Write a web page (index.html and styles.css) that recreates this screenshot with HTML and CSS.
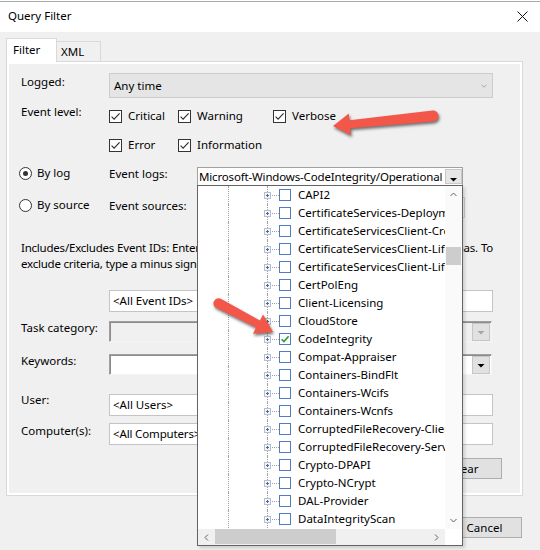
FILE: index.html
```html
<!DOCTYPE html>
<html>
<head>
<meta charset="utf-8">
<title>Query Filter</title>
<link rel="stylesheet" href="styles.css">
</head>
<body>
<div class="window">
  <div class="titlebar">
    <span class="title">Query Filter</span>
    <svg class="close" width="11" height="11" viewBox="0 0 11 11"><path d="M0.5 0.5L10.5 10.5M10.5 0.5L0.5 10.5" stroke="#111" stroke-width="1"/></svg>
  </div>
  <div class="content">
    <div class="tabs">
      <div class="tab tab-active">Filter</div>
      <div class="tab">XML</div>
    </div>
    <div class="panel">
      <div class="row row-logged">
        <div class="label">Logged:</div>
        <div class="combo-disabled"><span>Any time</span><svg class="chev-light" width="6" height="4" viewBox="0 0 6 4"><path d="M0.5 0.8L3 3.2L5.5 0.8" fill="none" stroke="#a8a8a8" stroke-width="1"/></svg></div>
      </div>
      <div class="row row-level">
        <div class="label">Event level:</div>
        <div class="levels">
          <div class="check"><span class="box"><svg width="11" height="11" viewBox="0 0 11 11"><path d="M1.6 5.6L4.1 8.1L9.6 2.4" fill="none" stroke="#2b2b2b" stroke-width="1.1"/></svg></span>Critical</div>
          <div class="check"><span class="box"><svg width="11" height="11" viewBox="0 0 11 11"><path d="M1.6 5.6L4.1 8.1L9.6 2.4" fill="none" stroke="#2b2b2b" stroke-width="1.1"/></svg></span>Warning</div>
          <div class="check"><span class="box"><svg width="11" height="11" viewBox="0 0 11 11"><path d="M1.6 5.6L4.1 8.1L9.6 2.4" fill="none" stroke="#2b2b2b" stroke-width="1.1"/></svg></span>Verbose</div>
          <div class="check"><span class="box"><svg width="11" height="11" viewBox="0 0 11 11"><path d="M1.6 5.6L4.1 8.1L9.6 2.4" fill="none" stroke="#2b2b2b" stroke-width="1.1"/></svg></span>Error</div>
          <div class="check"><span class="box"><svg width="11" height="11" viewBox="0 0 11 11"><path d="M1.6 5.6L4.1 8.1L9.6 2.4" fill="none" stroke="#2b2b2b" stroke-width="1.1"/></svg></span>Information</div>
        </div>
      </div>
      <div class="row row-log">
        <div class="radio-col"><span class="radio radio-on"></span>By log</div>
        <div class="label label-mid">Event logs:</div>
        <div class="logs">
          <div class="logs-box">
            <span class="logs-text">Microsoft-Windows-CodeIntegrity/Operational</span>
            <span class="drop-btn"><svg width="15" height="13" viewBox="0 0 15 13"><path d="M4 8H11L7.5 11.5Z" fill="#000"/></svg></span>
          </div>
          <div class="popup">
            <div class="tree">
              <div class="node"><span class="guide"></span><span class="exp"><svg width="7" height="7" viewBox="0 0 7 7"><rect x="0.5" y="0.5" width="6" height="6" fill="#f4f6fa" stroke="#b8c0cf"/><path d="M2 3.5H5M3.5 2V5" stroke="#4a6aa8"/></svg></span><span class="conn"></span><span class="cb"></span><span class="name">CAPI2</span></div>
              <div class="node"><span class="guide"></span><span class="exp"><svg width="7" height="7" viewBox="0 0 7 7"><rect x="0.5" y="0.5" width="6" height="6" fill="#f4f6fa" stroke="#b8c0cf"/><path d="M2 3.5H5M3.5 2V5" stroke="#4a6aa8"/></svg></span><span class="conn"></span><span class="cb"></span><span class="name">CertificateServices-Deployment</span></div>
              <div class="node"><span class="guide"></span><span class="exp"><svg width="7" height="7" viewBox="0 0 7 7"><rect x="0.5" y="0.5" width="6" height="6" fill="#f4f6fa" stroke="#b8c0cf"/><path d="M2 3.5H5M3.5 2V5" stroke="#4a6aa8"/></svg></span><span class="conn"></span><span class="cb"></span><span class="name">CertificateServicesClient-CredentialRoaming</span></div>
              <div class="node"><span class="guide"></span><span class="exp"><svg width="7" height="7" viewBox="0 0 7 7"><rect x="0.5" y="0.5" width="6" height="6" fill="#f4f6fa" stroke="#b8c0cf"/><path d="M2 3.5H5M3.5 2V5" stroke="#4a6aa8"/></svg></span><span class="conn"></span><span class="cb"></span><span class="name">CertificateServicesClient-Lifecycle-System</span></div>
              <div class="node"><span class="guide"></span><span class="exp"><svg width="7" height="7" viewBox="0 0 7 7"><rect x="0.5" y="0.5" width="6" height="6" fill="#f4f6fa" stroke="#b8c0cf"/><path d="M2 3.5H5M3.5 2V5" stroke="#4a6aa8"/></svg></span><span class="conn"></span><span class="cb"></span><span class="name">CertificateServicesClient-Lifecycle-User</span></div>
              <div class="node"><span class="guide"></span><span class="exp"><svg width="7" height="7" viewBox="0 0 7 7"><rect x="0.5" y="0.5" width="6" height="6" fill="#f4f6fa" stroke="#b8c0cf"/><path d="M2 3.5H5M3.5 2V5" stroke="#4a6aa8"/></svg></span><span class="conn"></span><span class="cb"></span><span class="name">CertPolEng</span></div>
              <div class="node"><span class="guide"></span><span class="exp"><svg width="7" height="7" viewBox="0 0 7 7"><rect x="0.5" y="0.5" width="6" height="6" fill="#f4f6fa" stroke="#b8c0cf"/><path d="M2 3.5H5M3.5 2V5" stroke="#4a6aa8"/></svg></span><span class="conn"></span><span class="cb"></span><span class="name">Client-Licensing</span></div>
              <div class="node"><span class="guide"></span><span class="exp"><svg width="7" height="7" viewBox="0 0 7 7"><rect x="0.5" y="0.5" width="6" height="6" fill="#f4f6fa" stroke="#b8c0cf"/><path d="M2 3.5H5M3.5 2V5" stroke="#4a6aa8"/></svg></span><span class="conn"></span><span class="cb"></span><span class="name">CloudStore</span></div>
              <div class="node"><span class="guide"></span><span class="exp"><svg width="7" height="7" viewBox="0 0 7 7"><rect x="0.5" y="0.5" width="6" height="6" fill="#f4f6fa" stroke="#b8c0cf"/><path d="M2 3.5H5M3.5 2V5" stroke="#4a6aa8"/></svg></span><span class="conn"></span><span class="cb"><svg width="10" height="10" viewBox="0 0 10 10"><path d="M1.6 5.2L4 7.6L8.6 2.2" fill="none" stroke="#2f9a35" stroke-width="1.6"/></svg></span><span class="name">CodeIntegrity</span></div>
              <div class="node"><span class="guide"></span><span class="exp"><svg width="7" height="7" viewBox="0 0 7 7"><rect x="0.5" y="0.5" width="6" height="6" fill="#f4f6fa" stroke="#b8c0cf"/><path d="M2 3.5H5M3.5 2V5" stroke="#4a6aa8"/></svg></span><span class="conn"></span><span class="cb"></span><span class="name">Compat-Appraiser</span></div>
              <div class="node"><span class="guide"></span><span class="exp"><svg width="7" height="7" viewBox="0 0 7 7"><rect x="0.5" y="0.5" width="6" height="6" fill="#f4f6fa" stroke="#b8c0cf"/><path d="M2 3.5H5M3.5 2V5" stroke="#4a6aa8"/></svg></span><span class="conn"></span><span class="cb"></span><span class="name">Containers-BindFlt</span></div>
              <div class="node"><span class="guide"></span><span class="exp"><svg width="7" height="7" viewBox="0 0 7 7"><rect x="0.5" y="0.5" width="6" height="6" fill="#f4f6fa" stroke="#b8c0cf"/><path d="M2 3.5H5M3.5 2V5" stroke="#4a6aa8"/></svg></span><span class="conn"></span><span class="cb"></span><span class="name">Containers-Wcifs</span></div>
              <div class="node"><span class="guide"></span><span class="exp"><svg width="7" height="7" viewBox="0 0 7 7"><rect x="0.5" y="0.5" width="6" height="6" fill="#f4f6fa" stroke="#b8c0cf"/><path d="M2 3.5H5M3.5 2V5" stroke="#4a6aa8"/></svg></span><span class="conn"></span><span class="cb"></span><span class="name">Containers-Wcnfs</span></div>
              <div class="node"><span class="guide"></span><span class="exp"><svg width="7" height="7" viewBox="0 0 7 7"><rect x="0.5" y="0.5" width="6" height="6" fill="#f4f6fa" stroke="#b8c0cf"/><path d="M2 3.5H5M3.5 2V5" stroke="#4a6aa8"/></svg></span><span class="conn"></span><span class="cb"></span><span class="name">CorruptedFileRecovery-Client</span></div>
              <div class="node"><span class="guide"></span><span class="exp"><svg width="7" height="7" viewBox="0 0 7 7"><rect x="0.5" y="0.5" width="6" height="6" fill="#f4f6fa" stroke="#b8c0cf"/><path d="M2 3.5H5M3.5 2V5" stroke="#4a6aa8"/></svg></span><span class="conn"></span><span class="cb"></span><span class="name">CorruptedFileRecovery-Server</span></div>
              <div class="node"><span class="guide"></span><span class="exp"><svg width="7" height="7" viewBox="0 0 7 7"><rect x="0.5" y="0.5" width="6" height="6" fill="#f4f6fa" stroke="#b8c0cf"/><path d="M2 3.5H5M3.5 2V5" stroke="#4a6aa8"/></svg></span><span class="conn"></span><span class="cb"></span><span class="name">Crypto-DPAPI</span></div>
              <div class="node"><span class="guide"></span><span class="exp"><svg width="7" height="7" viewBox="0 0 7 7"><rect x="0.5" y="0.5" width="6" height="6" fill="#f4f6fa" stroke="#b8c0cf"/><path d="M2 3.5H5M3.5 2V5" stroke="#4a6aa8"/></svg></span><span class="conn"></span><span class="cb"></span><span class="name">Crypto-NCrypt</span></div>
              <div class="node"><span class="guide"></span><span class="exp"><svg width="7" height="7" viewBox="0 0 7 7"><rect x="0.5" y="0.5" width="6" height="6" fill="#f4f6fa" stroke="#b8c0cf"/><path d="M2 3.5H5M3.5 2V5" stroke="#4a6aa8"/></svg></span><span class="conn"></span><span class="cb"></span><span class="name">DAL-Provider</span></div>
              <div class="node"><span class="guide"></span><span class="exp"><svg width="7" height="7" viewBox="0 0 7 7"><rect x="0.5" y="0.5" width="6" height="6" fill="#f4f6fa" stroke="#b8c0cf"/><path d="M2 3.5H5M3.5 2V5" stroke="#4a6aa8"/></svg></span><span class="conn"></span><span class="cb"></span><span class="name">DataIntegrityScan</span></div>
            </div>
            <div class="vscroll">
              <span class="sb-btn"><svg width="7" height="5" viewBox="0 0 7 5"><path d="M0.5 4L3.5 1L6.5 4" fill="none" stroke="#606060" stroke-width="1"/></svg></span>
              <span class="vtrack"><span class="vthumb"></span></span>
              <span class="sb-btn"><svg width="7" height="5" viewBox="0 0 7 5"><path d="M0.5 1L3.5 4L6.5 1" fill="none" stroke="#606060" stroke-width="1"/></svg></span>
            </div>
            <div class="hscroll">
              <span class="sb-btn sb-h"><svg width="5" height="7" viewBox="0 0 5 7"><path d="M4 0.5L1 3.5L4 6.5" fill="none" stroke="#606060" stroke-width="1"/></svg></span>
              <span class="htrack"><span class="hthumb"></span></span>
              <span class="sb-btn sb-h"><svg width="5" height="7" viewBox="0 0 5 7"><path d="M1 0.5L4 3.5L1 6.5" fill="none" stroke="#606060" stroke-width="1"/></svg></span>
            </div>
            <div class="corner"></div>
          </div>
        </div>
      </div>
      <div class="row row-src">
        <div class="radio-col"><span class="radio"></span>By source</div>
        <div class="label label-mid">Event sources:</div>
        <div class="src-field"></div>
      </div>
      <p class="para"><span class="para-line1">Includes/Excludes Event IDs: Enter ID numbers and/or ID ranges separated by commas. To</span><span class="para-line2">exclude criteria, type a minus sign first. For example 1,3,5-99,-76</span></p>
      <div class="row row-ids">
        <div class="label"></div>
        <div class="field">&lt;All Event IDs&gt;</div>
      </div>
      <div class="row row-task">
        <div class="label">Task category:</div>
        <div class="field3d field3d-disabled"><span class="mini-btn"><svg width="16" height="16" viewBox="0 0 16 16"><path d="M4.5 7H11.5L8 10.5Z" fill="#a6a6a6"/></svg></span></div>
      </div>
      <div class="row row-kw">
        <div class="label">Keywords:</div>
        <div class="field3d"><span class="mini-btn"><svg width="16" height="16" viewBox="0 0 16 16"><path d="M4.5 7H11.5L8 10.5Z" fill="#000"/></svg></span></div>
      </div>
      <div class="row row-user">
        <div class="label">User:</div>
        <div class="field">&lt;All Users&gt;</div>
      </div>
      <div class="row row-comp">
        <div class="label">Computer(s):</div>
        <div class="field field-tight">&lt;All Computers&gt;</div>
      </div>
      <div class="btn btn-clear">Clear</div>
    </div>
    <div class="footer">
      <div class="btn">OK</div>
      <div class="btn">Cancel</div>
    </div>
  </div>
  <svg class="arrows" width="540" height="550" viewBox="0 0 540 550">
    <path d="M333 126L348.8 113.4L349.5 120.3L432.5 110.5A5.5 5.5 0 0 1 433.5 121.5L350.3 128.3L351 135.2Z" fill="#f3574a"/>
    <path d="M273 332L263.1 314.4L259.9 320.6L220.3 298.6A5 5 0 0 0 215.7 307.4L256.1 327.6L252.9 333.8Z" fill="#f3574a"/>
  </svg>
</div>
</body>
</html>
```

FILE: styles.css
```css
* {
  box-sizing: border-box;
}

html,
body {
  margin: 0;
  padding: 0;
  background: #ffffff;
}

body {
  font-family: "Noto Sans", "DejaVu Sans", sans-serif;
  font-size: 11.5px;
  line-height: 16px;
  color: #000000;
}

.window {
  position: relative;
  width: 540px;
  height: 550px;
  overflow: hidden;
  padding-top: 1px;
  background: #ffffff;
}

.titlebar {
  height: 31px;
  border-top: 1px solid #a8a8a8;
  background: #ffffff;
  display: flex;
  align-items: center;
  justify-content: space-between;
  padding: 0 12px 2px 8px;
}

.close {
  display: block;
}

.content {
  background: #f0f0f0;
  height: 518px;
  padding: 6px 0 0 6px;
}

.tabs {
  display: flex;
  align-items: flex-end;
  height: 23px;
  position: relative;
  z-index: 1;
}

.tab {
  width: 44px;
  height: 20px;
  padding-left: 4px;
  border: 1px solid #d9d9d9;
  border-left: none;
  border-bottom: none;
  background: #f0f0f0;
  line-height: 19px;
}

.tab-active {
  width: 51px;
  height: 24px;
  margin-bottom: -1px;
  padding-left: 6px;
  border-left: 1px solid #d9d9d9;
  background: #ffffff;
  line-height: 22px;
}

.panel {
  width: 517px;
  height: 435px;
  border: 1px solid #d9d9d9;
  box-shadow: inset 0 0 0 2px #ffffff;
  padding: 11px 0 0 14px;
  display: flex;
  flex-direction: column;
}

.row {
  display: flex;
  align-items: flex-start;
}

.label {
  width: 88px;
  flex: none;
  white-space: nowrap;
}

.row-logged .label {
  padding-top: 1px;
}

.combo-disabled {
  width: 384px;
  height: 25px;
  background: #e5e5e5;
  border: 1px solid #cccccc;
  display: flex;
  align-items: center;
  justify-content: space-between;
  padding: 0 5px 0 4px;
}

.chev-light {
  display: block;
}

.row-level {
  margin-top: 6px;
}

.levels {
  display: grid;
  grid-template-columns: 69px 95px auto;
  row-gap: 13px;
  padding-top: 4px;
}

.check {
  display: flex;
  align-items: center;
  gap: 6px;
  height: 16px;
  white-space: nowrap;
}

.box {
  width: 13px;
  height: 13px;
  flex: none;
  border: 1px solid #333333;
  background: #ffffff;
  display: flex;
}

.row-log {
  margin-top: 12px;
  margin-left: -2px;
  height: 21px;
  position: relative;
  z-index: 5;
}

.row-src {
  margin-top: 11px;
  margin-left: -2px;
  height: 21px;
}

.radio-col {
  width: 90px;
  flex: none;
  display: flex;
  align-items: center;
  gap: 5px;
  height: 16px;
  white-space: nowrap;
}

.radio {
  width: 13px;
  height: 13px;
  flex: none;
  border: 1px solid #333333;
  border-radius: 50%;
  background: #ffffff;
  display: flex;
  align-items: center;
  justify-content: center;
}

.radio-on::after {
  content: "";
  width: 5px;
  height: 5px;
  border-radius: 50%;
  background: #333333;
}

.label-mid {
  padding-top: 1px;
}

.logs {
  position: relative;
  width: 266px;
  margin-top: 2px;
}

.logs-box {
  height: 19px;
  border: 1px solid #a0a0a0;
  background: #ffffff;
  display: flex;
}

.logs-text {
  flex: 1;
  min-width: 0;
  overflow: hidden;
  white-space: nowrap;
  line-height: 17px;
  padding-left: 1px;
  letter-spacing: -0.16px;
}

.drop-btn {
  width: 17px;
  height: 15px;
  margin: 1px 0;
  flex: none;
  background: #e6e6e6;
  border: 1px solid #c8c8c8;
  display: flex;
  align-items: flex-start;
  justify-content: center;
  overflow: hidden;
}

.popup {
  position: absolute;
  left: 0;
  top: 18px;
  width: 266px;
  height: 361px;
  border: 1px solid #646464;
  background: #ffffff;
  display: grid;
  grid-template-columns: 247px 17px;
  grid-template-rows: 343px 16px;
  z-index: 10;
  box-shadow: 2px 2px 3px rgba(0, 0, 0, 0.15);
}

.tree {
  overflow: hidden;
  padding-left: 30px;
}

.node {
  display: flex;
  align-items: center;
  height: 18px;
  white-space: nowrap;
}

.guide {
  width: 35px;
  height: 18px;
  flex: none;
  border-left: 1px dotted #a0a0a0;
}

.exp {
  width: 9px;
  height: 18px;
  flex: none;
  position: relative;
  display: flex;
  align-items: center;
  justify-content: center;
}

.exp::before {
  content: "";
  position: absolute;
  left: 4px;
  top: 0;
  bottom: 0;
  border-left: 1px dotted #a0a0a0;
}

.exp svg {
  position: relative;
  display: block;
}

.conn {
  width: 7px;
  flex: none;
  border-top: 1px dotted #a0a0a0;
}

.cb {
  width: 12px;
  height: 12px;
  flex: none;
  border: 1px solid #4f7cc4;
  background: #ffffff;
  display: flex;
}

.name {
  margin-left: 7px;
}

.vscroll {
  background: #fafafa;
  display: flex;
  flex-direction: column;
}

.sb-btn {
  height: 17px;
  flex: none;
  display: flex;
  align-items: center;
  justify-content: center;
}

.sb-h {
  width: 17px;
  height: 16px;
}

.vtrack {
  flex: 1;
  display: flex;
  flex-direction: column;
}

.vthumb {
  height: 18px;
  margin: 44px 1px 0;
  background: #cdcdcd;
}

.hscroll {
  background: #f0f0f0;
  display: flex;
}

.htrack {
  flex: 1;
  display: flex;
}

.hthumb {
  width: 121px;
  margin: 0 0 1px;
  background: #cdcdcd;
}

.corner {
  background: #ffffff;
}

.src-field {
  width: 268px;
  height: 21px;
  background: #f0f0f0;
  border: 1px solid #cccccc;
}

.para {
  margin: 22px 0 0;
  width: 472px;
}

.para-line1 {
  display: block;
  white-space: nowrap;
  letter-spacing: -0.22px;
  text-align: justify;
  text-align-last: justify;
}

.para-line2 {
  display: block;
  white-space: nowrap;
  letter-spacing: -0.22px;
}

.field {
  width: 384px;
  height: 22px;
  background: #ffffff;
  border: 1px solid #c4c4c4;
  padding-left: 3px;
  line-height: 20px;
  white-space: nowrap;
}

.field-tight {
  letter-spacing: -0.15px;
}

.row-ids {
  margin-top: 18px;
}

.row-task {
  margin-top: 8px;
}

.row-kw {
  margin-top: 11px;
}

.row-user {
  margin-top: 17px;
}

.row-user .field {
  margin-top: 2px;
}

.row-comp {
  margin-top: 7px;
}

.field3d {
  width: 383px;
  height: 21px;
  margin-top: 1px;
  background: #ffffff;
  border: 1px solid;
  border-color: #a0a0a0 #f4f4f4 #f4f4f4 #a0a0a0;
  box-shadow: inset 1px 1px 0 #8c8c8c;
  display: flex;
  align-items: center;
  justify-content: flex-end;
  padding-right: 1px;
}

.field3d-disabled {
  background: #f0f0f0;
}

.mini-btn {
  width: 18px;
  height: 18px;
  background: #e1e1e1;
  border: 1px solid #c6c6c6;
  display: flex;
  align-items: center;
  justify-content: center;
}

.btn {
  width: 75px;
  height: 21px;
  background: #e1e1e1;
  border: 1px solid #adadad;
  display: flex;
  align-items: center;
  justify-content: center;
}

.btn-clear {
  align-self: flex-end;
  margin: 13px 20px 0 0;
}

.footer {
  display: flex;
  justify-content: flex-end;
  gap: 6px;
  margin-top: 21px;
  padding-right: 18px;
}

.arrows {
  position: absolute;
  left: 0;
  top: 0;
  z-index: 20;
  pointer-events: none;
  filter: drop-shadow(1px 2px 1.5px rgba(0, 0, 0, 0.55));
}
```
